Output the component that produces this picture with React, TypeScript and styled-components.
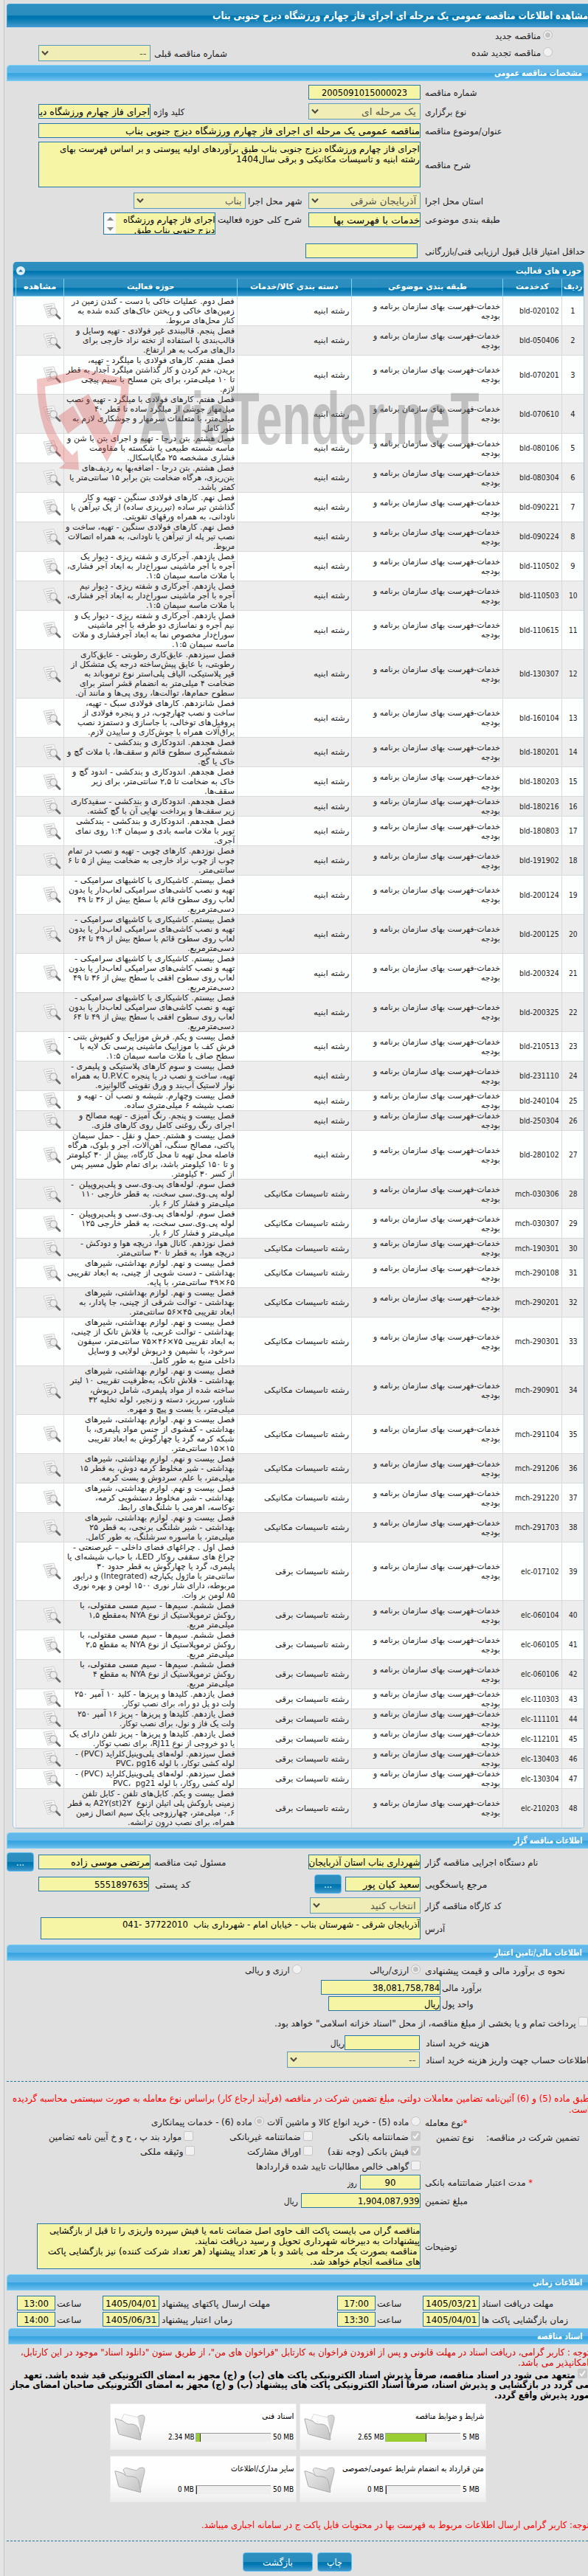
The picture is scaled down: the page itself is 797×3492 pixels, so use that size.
import React, { useLayoutEffect, useRef, useState } from 'react';
import styled, { createGlobalStyle, css } from 'styled-components';

const GlobalStyle = createGlobalStyle`
  * {
    box-sizing: border-box;
  }
  body {
    margin: 0;
    background: #e5e5e5;
    color: #1c1c1c;
    font-family: 'DejaVu Sans Condensed', 'DejaVu Sans', sans-serif;
    font-size: 12px;
    overflow-x: hidden;
  }
`;

const barGradient = css`
  background: linear-gradient(#2f90c0 0%, #2a8dbd 50%, #0075ae 51%, #0078b2 64%, #4499cb 100%);
`;

const Page = styled.div`
  direction: rtl;
  margin-left: 5px;
  border-left: 1px solid #c6c6c6;
  background: #e0e0e0;
  width: 792px;
  height: 3492px;
  overflow: hidden;
`;

const TitleBar = styled.div`
  ${barGradient}
  height: 32px;
  margin: 5px 0 0 3px;
  border: 1px solid #3a9edc;
  border-right: 0;
  border-radius: 4px 0 0 0;
  color: #fff;
  font-size: 14px;
  font-weight: bold;
  display: flex;
  align-items: center;
`;

const SectionBar = styled.div<{ $top: number; $inset?: number }>`
  height: 22px;
  margin: ${p => p.$top}px 0 0 ${p => p.$inset ?? 3}px;
  padding-right: 8px;
  background: linear-gradient(#62b8e9 0%, #60b6e8 48%, #36a4e0 50%, #3da8e2 65%, #6fbeeb 100%);
  border: 1px solid #79d0f7;
  border-right: 0;
  border-radius: 5px 0 0 0;
  color: #fff;
  font-weight: bold;
  display: flex;
  align-items: center;
`;

const Row = styled.div<{ $cols: string; $h: number; $top?: number; $align?: string }>`
  display: grid;
  grid-template-columns: ${p => p.$cols};
  height: ${p => p.$h}px;
  margin-top: ${p => p.$top ?? 0}px;
  align-items: ${p => p.$align ?? 'center'};
`;

const Label = styled.div<{ $pad?: number; $start?: boolean }>`
  display: flex;
  justify-content: ${p => (p.$start ? 'flex-start' : 'flex-end')};
  align-items: center;
  padding-left: ${p => p.$pad ?? 6}px;
  line-height: 16px;
  padding-top: 2px;
`;

const FieldBox = styled.div<{ $center?: boolean }>`
  height: 20px;
  border: 1px solid #2577aa;
  background: #f6f4a5;
  color: #000;
  font-size: 13px;
  overflow: hidden;
  display: flex;
  align-items: center;
  justify-content: ${p => (p.$center ? 'center' : 'flex-start')};
`;

const AreaBox = styled.div<{ $h: number }>`
  position: relative;
  height: ${p => p.$h}px;
  border: 1px solid #2577aa;
  background: #f6f4a5;
  color: #000;
  overflow: hidden;
  line-height: 14px;
  padding-top: 2px;
`;

const SelectBox = styled.div`
  height: 22px;
  border: 1px solid #5b9bbd;
  background: #f0edb7;
  color: #55554a;
  font-size: 13px;
  display: flex;
  align-items: center;
  justify-content: space-between;
  padding: 0 5px 0 3px;
`;

const ScrollStrip = styled.div`
  position: absolute;
  left: 0;
  top: 0;
  width: 16px;
  height: 100%;
  background: #fbfbfb;
  display: flex;
  flex-direction: column;
  justify-content: space-around;
  align-items: center;
`;

const Radio = styled.span<{ $on?: boolean }>`
  width: 13px;
  height: 13px;
  border-radius: 50%;
  border: 1px solid #c4c4c4;
  background: ${p => (p.$on ? '#c2c2c2' : '#f1f1f1')};
  box-shadow: ${p => (p.$on ? 'inset 0 0 0 2px #f1f1f1' : 'none')};
  flex: none;
  margin-bottom: 3px;
`;

const CheckBox = styled.span<{ $on?: boolean }>`
  width: 13px;
  height: 13px;
  border-radius: 2px;
  border: 1px solid #c6c6c6;
  background: ${p => (p.$on ? '#cacaca' : '#f1f1f1')};
  flex: none;
  display: flex;
  margin-bottom: 4px;
`;

const Option = styled.div`
  display: flex;
  align-items: center;
  line-height: 16px;
  gap: 3px;
`;

const Button = styled.div`
  ${barGradient}
  height: 26px;
  border: 1px solid #5cbcf0;
  border-radius: 4px;
  color: #fff;
  font-size: 13px;
  display: flex;
  align-items: center;
  justify-content: center;
`;

const DashedRule = styled.div<{ $top: number }>`
  margin: ${p => p.$top}px 0 0 3px;
  border-top: 1px dashed #2577aa;
`;

const Paragraph = styled.div<{ $top: number; $lh: number; $color?: string; $bold?: boolean }>`
  margin: ${p => p.$top}px -2px 0 0;
  line-height: ${p => p.$lh}px;
  color: ${p => p.$color ?? '#000'};
  font-weight: ${p => (p.$bold ? 'bold' : 'normal')};
  font-size: 12.5px;
`;

const Star = styled.span`
  color: #f00;
`;

const Panel = styled.div`
  position: relative;
  width: 775px;
  margin: 5px 5px 0 0;
  border: 1px solid #9cc8e0;
  border-top: 0;
  border-radius: 5px;
  overflow: hidden;
  background: #f4f7f9;
`;

const PanelTitle = styled.div`
  ${barGradient}
  height: 23px;
  padding: 0 3px 0 4px;
  color: #fff;
  font-weight: bold;
  display: flex;
  align-items: center;
  justify-content: space-between;
`;

const columns = '30px 80px 205px 155px 235px 65px';

const HeadRow = styled.div`
  ${barGradient}
  display: grid;
  grid-template-columns: ${columns};
  height: 24px;
  padding-left: 3px;
  border-bottom: 1px solid #7ad4f7;
  color: #fff;
  font-weight: bold;
  font-size: 11px;
`;

const HeadCell = styled.div`
  display: flex;
  align-items: center;
  justify-content: center;
  border-left: 1px solid #7ad4f7;
  padding-bottom: 2px;
`;

const BodyRow = styled.div<{ $lines: number; $even: boolean }>`
  display: grid;
  grid-template-columns: ${columns};
  height: ${p => p.$lines * 13 + 1}px;
  margin-left: 3px;
  background: ${p => (p.$even ? '#ededed' : '#fdfefe')};
  border-bottom: 1px solid #dadada;
  font-size: 11px;
  line-height: 13px;
`;

const BodyCell = styled.div<{ $center?: boolean }>`
  display: flex;
  flex-direction: column;
  justify-content: center;
  align-items: ${p => (p.$center ? 'center' : 'flex-start')};
  border-left: 1px solid #dadada;
  padding-right: ${p => (p.$center ? 0 : 3)}px;
`;

const Watermark = styled.div`
  position: absolute;
  left: 32px;
  right: 141px;
  top: 145px;
  height: 142px;
  pointer-events: none;
  display: flex;
  justify-content: space-between;
`;

const WatermarkName = styled.div`
  margin-top: 17px;
  font-family: 'Liberation Sans', sans-serif;
  font-weight: bold;
  font-size: 100px;
  line-height: 100px;
  color: rgba(110, 110, 110, 0.36);
`;

const Cards = styled.div`
  display: grid;
  grid-template-columns: 253px 253px;
  gap: 8px 4px;
  margin: 4px 138px 0 0;
`;

const Card = styled.div`
  height: 63px;
  background: linear-gradient(#fff 0%, #fdfdfd 60%, #ededed 100%);
  border: 1px solid #eaeaea;
  display: grid;
  grid-template-columns: 1fr 48px;
  align-items: center;
  color: #000;
  font-size: 11px;
`;

const CardName = styled.div`
  padding-right: 2px;
  height: 28px;
`;

const Meter = styled.div`
  display: grid;
  grid-template-columns: 34px 102px 60px;
  height: 14px;
  align-items: center;
`;

const MeterEnd = styled.div<{ $used?: boolean }>`
  display: flex;
  justify-content: ${p => (p.$used ? 'flex-start' : 'flex-end')};
  padding: ${p => (p.$used ? '0 2px 0 0' : '0 0 0 3px')};
`;

const Track = styled.div`
  height: 12px;
  background: #eeeeee;
  border-top: 1px solid #999;
  border-left: 1px solid #aaa;
  direction: ltr;
`;

const Used = styled.div`
  height: 100%;
  background: #9acd32;
  border-right: 1px solid #333;
`;

const Buttons = styled.div`
  display: grid;
  grid-template-columns: 47px 95px;
  gap: 6px;
  margin: 15px 320px 0 0;
`;

const FitBox = styled.span`
  display: inline-block;
  vertical-align: top;
  flex: none;
  white-space: pre;
`;

const FitInner = styled.span`
  display: inline-block;
  vertical-align: top;
  transform-origin: right center;
`;

/* Condenses a line of text so that it takes exactly `w` pixels. */
const Fit: React.FC<{ w: number; children: React.ReactNode }> = ({ w, children }) => {
  const ref = useRef<HTMLSpanElement>(null);
  const [scale, setScale] = useState(1);
  useLayoutEffect(() => {
    if (ref.current) {
      setScale(w / ref.current.offsetWidth);
    }
  }, [w]);
  return (
    <FitBox style={{ width: w }}>
      <FitInner ref={ref} style={{ transform: `scaleX(${scale})` }}>{children}</FitInner>
    </FitBox>
  );
};

const Chevron = () => (
  <svg width="10" height="8" viewBox="0 0 10 8">
    <path d="M1 1.5 L5 5.8 L9 1.5" fill="none" stroke="#4a4a42" strokeWidth="2" />
  </svg>
);

const Check = () => (
  <svg width="11" height="11" viewBox="0 0 11 11">
    <path d="M2 5.5 L4.5 8.5 L9 2" fill="none" stroke="#fff" strokeWidth="1.6" />
  </svg>
);

const ViewIcon = () => (
  <svg width="25" height="24" viewBox="0 0 25 24">
    <path d="M1 3 L15 1 L20 17 L7 21 Z" fill="#f5f5f5" stroke="#cfcfcf" strokeWidth="0.9" />
    <path d="M4 6 L13 4.5 M4.5 9 L13 7.5 M5.5 12 L11 11 M6.5 15 L10 14.4 M7.5 18 L12 17" stroke="#a9a9a9" strokeWidth="0.9" />
    <circle cx="14.5" cy="12.5" r="4.8" fill="#ececec" fillOpacity="0.85" stroke="#b4b4b4" strokeWidth="1.3" />
    <path d="M18.5 17 L23 21.5" stroke="#6d6d6d" strokeWidth="2.8" strokeLinecap="round" />
  </svg>
);

const CollapseIcon = () => (
  <svg width="12" height="12" viewBox="0 0 12 12">
    <circle cx="6" cy="6" r="6" fill="#dff0fa" />
    <path d="M3 7.5 L6 4.2 L9 7.5 Z" fill="#1c74a5" />
  </svg>
);

const Shield = () => (
  <svg width="126" height="142" viewBox="0 0 126 142">
    <g opacity="0.33">
      <path
        d="M0 14 Q36 8 62 0 Q90 8 125 14 Q124 76 95 126 L51 46 L70 34 L101 90 Q113 60 114 24 Q88 19 62 12 Q38 19 11 24 Q13 84 48 117 L55 110 L57 137 L30 135 L38 128 Q0 88 0 14 Z"
        fill="#d9534f"
      />
      <path d="M29 64 L49 50 L62 73 L42 88 Z" fill="#d9534f" />
    </g>
  </svg>
);

const Folder: React.FC<{ full?: boolean }> = ({ full }) => (
  <svg width="43" height="38" viewBox="0 0 43 38">
    <defs>
      <linearGradient id="folder" x1="0" y1="0" x2="1" y2="1">
        <stop offset="0" stopColor="#ececec" />
        <stop offset="1" stopColor="#c2c2c2" />
      </linearGradient>
    </defs>
    <path d="M12 6 Q14 2 18 4 L30 7 Q34 2 39 3 Q42 4 41 9 L35 34 Q20 30 12 6 Z" fill="url(#folder)" stroke="#b5b5b5" />
    {full && <path d="M9 11 L13 1.5 L32 6 L36 26 L30 27 Z" fill="#fbfbfb" stroke="#dcdcdc" />}
    <path d="M1 9 Q0 7 3 8 L12 11 Q16 16 23 15 Q32 16 33 22 L36 36 Q35 37 33 36 L7 29 Q5 28 5 25 Z" fill="url(#folder)" stroke="#ababab" />
  </svg>
);

const Select: React.FC<{ text: string; w: number }> = ({ text, w }) => (
  <SelectBox>
    <Fit w={w}>{text}</Fit>
    <Chevron />
  </SelectBox>
);

type Line = [string, number];

const ch20 = 'فصل بیستم. کاشیکاری با کاشیهای سرامیکی -';
const ch20b = 'تهیه و نصب کاشی‌های سرامیکی لعاب‌دار یا بدون';
const ch29 = 'فصل بیست و نهم. لوازم بهداشتی، شیرهای';
const ch6 = 'فصل ششم. سیم‌ها - سیم مسی مفتولی، با';
const ch3 = 'فصل سوم. لوله‌های پی.وی.سی و پلی‌پروپیلن  -';

const activities: { code: string; lines: Line[] }[] = [
  { code: 'bld-020102', lines: [['فصل دوم. عملیات خاکی با دست - کندن زمین در', 221], ['زمین‌های خاکی و ریختن خاک‌های کنده شده به', 213], ['کنار محل‌های مربوط.', 93]] },
  { code: 'bld-050406', lines: [['فصل پنجم. قالببندی غیر فولادی - تهیه وسایل و', 215], ['قالب‌بندی با استفاده از تخته نراد خارجی برای', 206], ['دال‌های مرکب به هر ارتفاع.', 124]] },
  { code: 'bld-070201', lines: [['فصل هفتم. کارهای فولادی با میلگرد - تهیه،', 199], ['بریدن، خم کردن و کار گذاشتن میلگرد آجدار به قطر', 228], ['تا ۱۰ میلی‌متر، برای بتن مسلح با سیم پیچی', 208], ['لازم.', 20]] },
  { code: 'bld-070610', lines: [['فصل هفتم. کارهای فولادی با میلگرد - تهیه و نصب', 228], ['میل‌مهار جوشی از میلگرد ساده تا قطر ۴۰', 190], ['میلی‌متر، با متعلقات سرمهار و جوشکاری لازم به', 220], ['طور کامل.', 45]] },
  { code: 'bld-080106', lines: [['فصل هشتم. بتن درجا - تهیه و اجرای بتن با شن و', 227], ['ماسه شسته طبیعی یا شکسته با مقاومت', 197], ['فشاری مشخصه ۲۵ مگاپاسکال.', 146]] },
  { code: 'bld-080304', lines: [['فصل هشتم. بتن درجا - اضافه‌بها به ردیف‌های', 207], ['بتن‌ریزی، هرگاه ضخامت بتن برابر ۱۵ سانتی‌متر یا', 224], ['کمتر باشد.', 50]] },
  { code: 'bld-090221', lines: [['فصل نهم. کارهای فولادی سنگین - تهیه و کار', 205], ['گذاشتن تیر ساده (تیرریزی ساده) از یک تیرآهن یا', 222], ['ناودانی، به همراه ورقهای تقویتی.', 153]] },
  { code: 'bld-090224', lines: [['فصل نهم. کارهای فولادی سنگین - تهیه، ساخت و', 229], ['نصب تیر پله از تیرآهن یا ناودانی، به همراه اتصالات', 226], ['مربوط.', 29]] },
  { code: 'bld-110502', lines: [['فصل یازدهم. آجرکاری و شفته ریزی - دیوار یک', 209], ['آجره با آجر ماشینی سوراخ‌دار به ابعاد آجر فشاری،', 227], ['با ملات ماسه سیمان ۱:۵.', 120]] },
  { code: 'bld-110503', lines: [['فصل یازدهم. آجرکاری و شفته ریزی - دیوار نیم', 210], ['آجره با آجر ماشینی سوراخ‌دار به ابعاد آجر فشاری،', 227], ['با ملات ماسه سیمان ۱:۵.', 120]] },
  { code: 'bld-110615', lines: [['فصل یازدهم. آجرکاری و شفته ریزی - دیوار یک و', 217], ['نیم آجره و نماسازی دو طرفه با آجر ماشینی', 199], ['سوراخ‌دار مخصوص نما به ابعاد آجرفشاری و ملات', 220], ['ماسه سیمان ۱:۵.', 85]] },
  { code: 'bld-130307', lines: [['فصل سیزدهم. عایق‌کاری رطوبتی - عایق‌کاری', 209], ['رطوبتی، با عایق پیش‌ساخته درجه یک متشکل از', 222], ['قیر پلاستیکی، الیاف پلی‌استر نوع ترموباند به', 204], ['ضخامت ۴ میلی‌متر به انضمام قشر آستر برای', 210], ['سطوح حمام‌ها، توالت‌ها، روی پی‌ها و مانند آن.', 216]] },
  { code: 'bld-160104', lines: [['فصل شانزدهم. کارهای فولادی سبک - تهیه،', 202], ['ساخت و نصب چهارچوب، در و پنجره فولادی از', 206], ['پروفیل‌های توخالی، با جاسازی و دستمزد نصب', 213], ['یراق‌آلات همراه با جوش‌کاری و ساییدن لازم.', 199]] },
  { code: 'bld-180201', lines: [['فصل هجدهم. اندودکاری و بندکشی -', 171], ['شمشه‌گیری سطوح قائم و سقف‌ها، با ملات گچ و', 227], ['خاک یا گچ.', 50]] },
  { code: 'bld-180203', lines: [['فصل هجدهم. اندودکاری و بندکشی - اندود گچ و', 220], ['خاک به ضخامت تا ۲,۵ سانتی‌متر، برای زیر', 194], ['سقف‌ها.', 41]] },
  { code: 'bld-180216', lines: [['فصل هجدهم. اندودکاری و بندکشی - سفیدکاری', 222], ['زیر سقف‌ها و پرداخت نهایی آن با گچ کشته.', 200]] },
  { code: 'bld-180803', lines: [['فصل هجدهم. اندودکاری و بندکشی - بندکشی', 215], ['توپر با ملات ماسه بادی و سیمان ۱:۴ روی نمای', 216], ['آجری.', 28]] },
  { code: 'bld-191902', lines: [['فصل نوزدهم. کارهای چوبی - تهیه و نصب در تمام', 226], ['چوب از چوب نراد خارجی به ضخامت بیش از ۵ تا ۶', 226], ['سانتی‌متر.', 49]] },
  { code: 'bld-200124', lines: [[ch20, 217], [ch20b, 225], ['لعاب روی سطوح قائم با سطح بیش از ۳۶ تا ۴۹', 213], ['دسی‌مترمربع.', 64]] },
  { code: 'bld-200125', lines: [[ch20, 217], [ch20b, 225], ['لعاب روی سطوح قائم با سطح بیش از ۴۹ تا ۶۴', 213], ['دسی‌مترمربع.', 64]] },
  { code: 'bld-200324', lines: [[ch20, 217], [ch20b, 225], ['لعاب روی سطوح افقی با سطح بیش از ۳۶ تا ۴۹', 219], ['دسی‌مترمربع.', 64]] },
  { code: 'bld-200325', lines: [[ch20, 217], [ch20b, 225], ['لعاب روی سطوح افقی با سطح بیش از ۴۹ تا ۶۴', 219], ['دسی‌مترمربع.', 64]] },
  { code: 'bld-210513', lines: [['فصل بیست و یکم. فرش موزاییک و کفپوش بتنی -', 226], ['فرش کف با موزاییک ماشینی پرسی تک لایه با', 210], ['سطح صاف با ملات ماسه سیمان ۱:۵.', 174]] },
  { code: 'bld-231110', lines: [['فصل بیست و سوم کارهای پلاستیکی و پلیمری -', 222], ['تهیه، ساخت و نصب در یا پنجره U.P.V.C به همراه', 222], ['نوار لاستیک آب‌بند و ورق تقویتی گالوانیزه.', 189]] },
  { code: 'bld-240104', lines: [['فصل بیست وچهارم. شیشه و نصب آن - تهیه و', 213], ['نصب شیشه ۶ میلی‌متری ساده.', 150]] },
  { code: 'bld-250304', lines: [['فصل بیست و پنجم. رنگ آمیزی - تهیه مصالح و', 211], ['اجرای رنگ روغنی کامل روی کارهای فلزی.', 194]] },
  { code: 'bld-280102', lines: [['فصل بیست و هشتم. حمل و نقل - حمل سیمان', 220], ['پاکتی، مصالح سنگی، آهن‌آلات، آجر و بلوک، هرگاه', 226], ['فاصله محل تهیه تا محل کارگاه، بیش از ۳۰ کیلومتر', 227], ['و تا ۱۵۰ کیلومتر باشد، برای تمام طول مسیر پس', 222], ['از کسر ۳۰ کیلومتر.', 86]] },
  { code: 'mch-030306', lines: [[ch3, 222], ['لوله پی.وی.سی سخت، به قطر خارجی ۱۱۰', 208], ['میلی‌متر و فشار کار ۶ بار.', 116]] },
  { code: 'mch-030307', lines: [[ch3, 222], ['لوله پی.وی.سی سخت، به قطر خارجی ۱۲۵', 208], ['میلی‌متر و فشار کار ۶ بار.', 116]] },
  { code: 'mch-190301', lines: [['فصل نوزدهم. کانال هوا، دریچه هوا و دودکش -', 209], ['دریچه هوا، به قطر تا ۳۰ سانتی‌متر.', 160]] },
  { code: 'mch-290108', lines: [[ch29, 203], ['بهداشتی - دست شویی از چینی، به ابعاد تقریبی', 227], ['۶۵×۴۹ سانتی‌متر، با پایه.', 119]] },
  { code: 'mch-290201', lines: [[ch29, 203], ['بهداشتی - توالت شرقی از چینی، جا پادار، به', 211], ['ابعاد تقریبی ۴۵×۵۶ سانتی‌متر.', 143]] },
  { code: 'mch-290301', lines: [[ch29, 203], ['بهداشتی - توالت غربی، با فلاش تانک از چینی،', 222], ['به ابعاد تقریبی ۷۵×۴۶×۷۵ سانتی‌متر، سیفون', 213], ['سرخود، با نشیمن و درپوش لولایی و وسایل', 199], ['داخلی منبع به طور کامل.', 115]] },
  { code: 'mch-290901', lines: [[ch29, 203], ['بهداشتی - فلاش تانک، به‌ظرفیت تقریبی ۱۰ لیتر', 223], ['ساخته شده از مواد پلیمری، شامل درپوش،', 196], ['شناور، سرریز، دسته و زنجیر، لوله تخلیه ۳۲', 198], ['میلی‌متر، با بست و پیچ و مهره.', 146]] },
  { code: 'mch-291104', lines: [[ch29, 203], ['بهداشتی - کفشوی از جنس مواد پلیمری، با', 201], ['شبکه کرمه گرد یا چهارگوش به ابعاد تقریبی', 199], ['۱۵×۱۵ سانتی‌متر.', 86]] },
  { code: 'mch-291206', lines: [[ch29, 203], ['بهداشتی - شیر مخلوط کرمه دوش، به قطر ۱۵', 210], ['میلی‌متر، با علم، سردوش و بست کرمه.', 184]] },
  { code: 'mch-291220', lines: [[ch29, 203], ['بهداشتی - شیر مخلوط دستشویی کرمه،', 189], ['توکاسه، اهرمی با شلنگ‌های رابط.', 159]] },
  { code: 'mch-291703', lines: [[ch29, 203], ['بهداشتی - شیر شلنگی برنجی، به قطر ۲۵', 197], ['میلی‌متر، با ماسوره سرشلنگ، به طور کامل.', 202]] },
  { code: 'elc-017102', lines: [['فصل اول . چراغهای فضای داخلی – غیرصنعتی -', 219], ['چراغ های سقفی روکار LED، با حباب شیشه‌ای یا', 227], ['پلیمری، گرد یا چهارگوش به قطر حدود ۳۰', 187], ['سانتی‌متر با ماژول یکپارچه (Integrated) و درایور', 219], ['مربوطه، دارای شار نوری ۱۵۰۰ لومن و بهره نوری', 219], ['۸۵ لومن بر وات.', 72]] },
  { code: 'elc-060104', lines: [[ch6, 210], ['روکش ترموپلاستیک از نوع NYA به‌مقطع ۱,۵', 198], ['میلی‌متر مربع.', 65]] },
  { code: 'elc-060105', lines: [[ch6, 210], ['روکش ترموپلاستیک از نوع NYA به مقطع ۲,۵', 203], ['میلی‌متر مربع.', 65]] },
  { code: 'elc-060106', lines: [[ch6, 210], ['روکش ترموپلاستیک از نوع NYA به مقطع ۴', 192], ['میلی‌متر مربع.', 65]] },
  { code: 'elc-110303', lines: [['فصل یازدهم. کلیدها و پریزها - کلید ۱۰ آمپر ۲۵۰', 217], ['ولت دو پل دو راه، برای نصب توکار.', 153]] },
  { code: 'elc-111101', lines: [['فصل یازدهم. کلیدها و پریزها - پریز ۱۶ آمپر ۲۵۰', 213], ['ولت یک فاز و نول، برای نصب توکار.', 156]] },
  { code: 'elc-112101', lines: [['فصل یازدهم. کلیدها و پریزها - پریز تلفن دارای یک', 224], ['یا دو خروجی از نوع RJ11، برای نصب توکار.', 192]] },
  { code: 'elc-130403', lines: [['فصل سیزدهم. لوله‌های پلی‌وینیل‌کلراید (PVC) -', 216], ['لوله کشی توکار، با لوله PVC، pg16', 161]] },
  { code: 'elc-130304', lines: [['فصل سیزدهم. لوله‌های پلی‌وینیل‌کلراید (PVC) -', 216], ['لوله کشی روکار، با لوله PVC،  pg21', 165]] },
  { code: 'elc-210203', lines: [['فصل بیست و یکم. کابل‌های تلفن - کابل تلفن', 207], ['زمینی باروکش پلی اتیلن ازنوع  A2Y(st)2Y به قطر', 226], ['۰,۶ میلی‌متر، چهارزوجی بایک سیم اتصال زمین', 215], ['همراه، برای نصب درون ترانشه.', 145]] },
];

const categories: Record<string, Line> = {
  bld: ['رشته ابنیه', 48],
  mch: ['رشته تاسیسات مکانیکی', 115],
  elc: ['رشته تاسیسات برقی', 100],
};

const headers: Line[] = [
  ['ردیف', 25],
  ['کدخدمت', 45],
  ['طبقه بندی موضوعی', 107],
  ['دسته بندی کالا/خدمات', 119],
  ['حوزه فعالیت', 64],
  ['مشاهده', 44],
];

const documents = [
  { name: 'شرایط و ضوابط مناقصه', w: 93, max: '5 MB', maxW: 23, used: '2.65 MB', usedW: 36, part: 54, full: true },
  { name: 'اسناد فنی', w: 44, max: '50 MB', maxW: 28, used: '2.34 MB', usedW: 36, part: 6, full: true },
  { name: 'متن قرارداد به انضمام شرایط عمومی/خصوصی', w: 192, max: '5 MB', maxW: 23, used: '0 MB', usedW: 22, part: 1, full: false },
  { name: 'سایر مدارک/اطلاعات', w: 86, max: '50 MB', maxW: 28, used: '0 MB', usedW: 22, part: 1, full: false },
];

const ActivityTable = () => (
  <Panel>
    <PanelTitle>
      <Fit w={89}>حوزه های فعالیت</Fit>
      <CollapseIcon />
    </PanelTitle>
    <HeadRow>
      {headers.map(([text, w]) => (
        <HeadCell key={text}><Fit w={w}>{text}</Fit></HeadCell>
      ))}
    </HeadRow>
    {activities.map(({ code, lines }, i) => {
      const [category, categoryWidth] = categories[code.slice(0, 3)];
      return (
        <BodyRow key={code} $lines={lines.length} $even={i % 2 === 1}>
          <BodyCell $center><Fit w={i < 9 ? 6 : 12}>{i + 1}</Fit></BodyCell>
          <BodyCell><Fit w={code[0] === 'm' ? 60 : code[0] === 'e' ? 52 : 54}>{code}</Fit></BodyCell>
          <BodyCell>
            <Fit w={172}>خدمات-فهرست بهای سازمان برنامه و</Fit>
            <Fit w={26}>بودجه</Fit>
          </BodyCell>
          <BodyCell><Fit w={categoryWidth}>{category}</Fit></BodyCell>
          <BodyCell>
            {lines.map(([text, w], n) => <Fit key={n} w={w}>{text}</Fit>)}
          </BodyCell>
          <BodyCell><ViewIcon /></BodyCell>
        </BodyRow>
      );
    })}
    <Watermark>
      <WatermarkName><Fit w={462}>AriaTender.neT</Fit></WatermarkName>
      <Shield />
    </Watermark>
  </Panel>
);

const App: React.FC = () => (
  <>
    <GlobalStyle />
    <Page>
      <TitleBar>
        <Fit w={509}>مشاهده اطلاعات مناقصه عمومی یک مرحله ای اجرای فاز چهارم ورزشگاه دیزج جنوبی بناب</Fit>
      </TitleBar>
      <Row $cols="48px 200px" $h={24}>
        <span />
        <Option><Radio $on /><Fit w={62}>مناقصه جدید</Fit></Option>
      </Row>
      <Row $cols="48px 340px 205px 152px" $h={22}>
        <span />
        <Option><Radio /><Fit w={94}>مناقصه تجدید شده</Fit></Option>
        <Label $pad={5}><Fit w={99}>شماره مناقصه قبلی</Fit></Label>
        <Select text="--" w={9} />
      </Row>

      <SectionBar $top={5}><Fit w={119}>مشخصات مناقصه عمومی</Fit></SectionBar>
      <Row $cols="227px 152px" $h={20} $top={5}>
        <Label><Fit w={71}>شماره مناقصه</Fit></Label>
        <FieldBox $center><Fit w={116}>2005091015000023</Fit></FieldBox>
      </Row>
      <Row $cols="227px 152px 214px 152px" $h={22} $top={5}>
        <Label><Fit w={56}>نوع برگزاری</Fit></Label>
        <Select text="یک مرحله ای" w={74} />
        <Label $pad={4}><Fit w={42}>کلید واژه</Fit></Label>
        <FieldBox><Fit w={226}>اجرای فاز چهارم ورزشگاه دیزج جنوبی بناب</Fit></FieldBox>
      </Row>
      <Row $cols="227px 518px" $h={20} $top={5}>
        <Label><Fit w={104}>عنوان/موضوع مناقصه</Fit></Label>
        <FieldBox><Fit w={399}>مناقصه عمومی یک مرحله ای اجرای فاز چهارم ورزشگاه دیزج جنوبی بناب</Fit></FieldBox>
      </Row>
      <Row $cols="227px 518px" $h={62} $top={5}>
        <Label><Fit w={62}>شرح مناقصه</Fit></Label>
        <AreaBox $h={62}>
          <Fit w={488}>اجرای فاز چهارم ورزشگاه دیزج جنوبی بناب طبق برآوردهای اولیه پیوستی و بر اساس فهرست بهای</Fit>
          <br />
          <Fit w={249}>رشته ابنیه و تاسیسات مکانیکی و برقی سال1404</Fit>
        </AreaBox>
      </Row>
      <Row $cols="227px 152px 85px 152px" $h={22} $top={7}>
        <Label><Fit w={79}>استان محل اجرا</Fit></Label>
        <Select text="آذربایجان شرقی" w={89} />
        <Label $pad={3}><Fit w={73}>شهر محل اجرا</Fit></Label>
        <Select text="بناب" w={22} />
      </Row>
      <Row $cols="227px 152px 126px 152px" $h={30} $top={5} $align="start">
        <Label><Fit w={102}>طبقه بندی موضوعی</Fit></Label>
        <FieldBox><Fit w={117}>خدمات با فهرست بها</Fit></FieldBox>
        <Label $pad={3}><Fit w={114}>شرح کلی حوزه فعالیت</Fit></Label>
        <AreaBox $h={30}>
          <Fit w={124}>اجرای فاز چهارم ورزشگاه</Fit>
          <br />
          <Fit w={109}>دیزج جنوبی بناب طبق</Fit>
          <ScrollStrip>
            <svg width="9" height="5"><path d="M0 5 L4.5 0 L9 5 Z" fill="#8a8a8a" /></svg>
            <svg width="9" height="5"><path d="M0 0 L4.5 5 L9 0 Z" fill="#8a8a8a" /></svg>
          </ScrollStrip>
        </AreaBox>
      </Row>
      <Row $cols="231px 152px" $h={20} $top={12}>
        <Label $pad={10}><Fit w={217}>حداقل امتیاز قابل قبول ارزیابی فنی/بازرگانی</Fit></Label>
        <FieldBox />
      </Row>

      <ActivityTable />

      <SectionBar $top={5}><Fit w={93}>اطلاعات مناقصه گزار</Fit></SectionBar>
      <Row $cols="227px 152px 214px 152px 43px" $h={25} $top={5}>
        <Label><Fit w={153}>نام دستگاه اجرایی مناقصه گزار</Fit></Label>
        <FieldBox><Fit w={186}>شهرداری بناب استان آذربایجان شرقی</Fit></FieldBox>
        <Label $pad={5}><Fit w={97}>مسئول ثبت مناقصه</Fit></Label>
        <FieldBox><Fit w={107}>مرتضی موسی زاده</Fit></FieldBox>
        <Row $cols="6px 37px" $h={26}><span /><Button>...</Button></Row>
      </Row>
      <Row $cols="227px 102px 5px 37px 224px 150px" $h={26} $top={5}>
        <Label><Fit w={84}>مرجع پاسخگویی</Fit></Label>
        <FieldBox><Fit w={77}>سعید کیان پور</Fit></FieldBox>
        <span />
        <Button>...</Button>
        <Label $pad={8}><Fit w={48}>کد پستی</Fit></Label>
        <FieldBox><Fit w={73}>5551897635</Fit></FieldBox>
      </Row>
      <Row $cols="227px 150px" $h={22} $top={5}>
        <Label><Fit w={104}>کد کارگاه مناقصه گزار</Fit></Label>
        <Select text="انتخاب کنید" w={62} />
      </Row>
      <Row $cols="227px 515px" $h={30} $top={5}>
        <Label><Fit w={27}>آدرس</Fit></Label>
        <AreaBox $h={30}>
          <Fit w={403}>آذربایجان شرقی - شهرستان بناب - خیابان امام - شهرداری بناب  37722010 -041</Fit>
        </AreaBox>
      </Row>

      <SectionBar $top={7}><Fit w={119}>اطلاعات مالی/تامین اعتبار</Fit></SectionBar>
      <Row $cols="227px 161px 200px" $h={26}>
        <Label><Fit w={190}>نحوه ی برآورد مالی و قیمت پیشنهادی</Fit></Label>
        <Option><Radio $on /><Fit w={53}>ارزی/ریالی</Fit></Option>
        <Option><Radio /><Fit w={61}>ارزی و ریالی</Fit></Option>
      </Row>
      <Row $cols="200px 162px" $h={20}>
        <Label $pad={2}><Fit w={54}>برآورد مالی</Fit></Label>
        <FieldBox><Fit w={91}>38,081,758,784</Fit></FieldBox>
      </Row>
      <Row $cols="200px 152px" $h={20} $top={2}>
        <Label $pad={2}><Fit w={42}>واحد پول</Fit></Label>
        <FieldBox><Fit w={21}>ریال</Fit></FieldBox>
      </Row>
      <Row $cols="500px" $h={33}>
        <Option><CheckBox /><Fit w={409}>پرداخت تمام و یا بخشی از مبلغ مناقصه، از محل "اسناد خزانه اسلامی" خواهد بود.</Fit></Option>
      </Row>
      <Row $cols="228px 102px 60px" $h={20}>
        <Label $pad={8}><Fit w={86}>هزینه خرید اسناد</Fit></Label>
        <FieldBox />
        <Label $start><Fit w={19}>ریال</Fit></Label>
      </Row>
      <Row $cols="228px 180px" $h={22} $top={2}>
        <Label $pad={8}><Fit w={221}>اطلاعات حساب جهت واریز هزینه خرید اسناد</Fit></Label>
        <Select text="--" w={9} />
      </Row>
      <DashedRule $top={18} />
      <Paragraph $top={15} $lh={15} $color="#f00">
        <Fit w={782}>طبق ماده (5) و (6) آئین‌نامه تضامین معاملات دولتی، مبلغ تضمین شرکت در مناقصه (فرآیند ارجاع کار) براساس نوع معامله به صورت سیستمی محاسبه گردیده</Fit>
        <br />
        <Fit w={28}>است.</Fit>
      </Paragraph>
      <Row $cols="227px 212px 200px" $h={20}>
        <Label><Star>*</Star><Fit w={52}>نوع معامله</Fit></Label>
        <Option><Radio /><Fit w={192}>ماده (5) - خرید انواع کالا و ماشین آلات</Fit></Option>
        <Option><Radio $on /><Fit w={137}>ماده (6) - خدمات پیمانکاری</Fit></Option>
      </Row>
      <Row $cols="12px 142px 73px 146px 162px 220px" $h={20}>
        <span />
        <Label $start><Fit w={126}>تضمین شرکت در مناقصه:</Fit></Label>
        <Label $start><Fit w={52}>نوع تضمین</Fit></Label>
        <Option><CheckBox $on><Check /></CheckBox><Fit w={81}>ضمانتنامه بانکی</Fit></Option>
        <Option><CheckBox /><Fit w={97}>ضمانتنامه غیربانکی</Fit></Option>
        <Option><CheckBox /><Fit w={180}>موارد بند پ ، ح و خ آیین نامه تضامین</Fit></Option>
      </Row>
      <Row $cols="227px 146px 160px 220px" $h={20}>
        <span />
        <Option><CheckBox $on><Check /></CheckBox><Fit w={110}>فیش بانکی (وجه نقد)</Fit></Option>
        <Option><CheckBox /><Fit w={73}>اوراق مشارکت</Fit></Option>
        <Option><CheckBox /><Fit w={58}>وثیقه ملکی</Fit></Option>
      </Row>
      <Row $cols="227px 300px" $h={20}>
        <span />
        <Option><CheckBox /><Fit w={207}>گواهی خالص مطالبات تایید شده قراردادها</Fit></Option>
      </Row>
      <Row $cols="227px 82px 60px" $h={20} $top={1}>
        <Label><Star>*&nbsp;</Star><Fit w={137}>مدت اعتبار ضمانتنامه بانکی</Fit></Label>
        <FieldBox $center><Fit w={15}>90</Fit></FieldBox>
        <Row $cols="4px 40px" $h={18}><span /><Label $start><Fit w={13}>روز</Fit></Label></Row>
      </Row>
      <Row $cols="227px 162px 60px" $h={20} $top={5}>
        <Label><Fit w={58}>مبلغ تضمین</Fit></Label>
        <FieldBox><Fit w={84}>1,904,087,939</Fit></FieldBox>
        <Row $cols="4px 40px" $h={18}><span /><Label $start><Fit w={19}>ریال</Fit></Label></Row>
      </Row>
      <Row $cols="227px 520px" $h={62} $top={21}>
        <Label><Fit w={43}>توضیحات</Fit></Label>
        <AreaBox $h={62}>
          <Fit w={502}>مناقصه گران می بایست پاکت الف حاوی اصل ضمانت نامه یا فیش سپرده واریزی را تا قبل از بازگشایی</Fit>
          <br />
          <Fit w={305}>پیشنهادات به دبیرخانه شهرداری تحویل و رسید دریافت نمایند.</Fit>
          <br />
          <Fit w={504}> مناقصه بصورت یک مرحله می باشد و با هر تعداد پیشنهاد (هر تعداد شرکت کننده) نیز بازگشایی پاکت</Fit>
          <br />
          <Fit w={149}>های مناقصه انجام خواهد شد.</Fit>
        </AreaBox>
      </Row>

      <SectionBar $top={7}><Fit w={67}>اطلاعات زمانی</Fit></SectionBar>
      <Row $cols="147px 77px 64px 52px 241px 77px 64px 52px" $h={20} $top={7}>
        <Label $pad={3}><Fit w={97}>مهلت دریافت اسناد</Fit></Label>
        <FieldBox $center><Fit w={69}>1405/03/21</Fit></FieldBox>
        <Label $pad={2}><Fit w={33}>ساعت</Fit></Label>
        <FieldBox $center><Fit w={34}>17:00</Fit></FieldBox>
        <Label $pad={3}><Fit w={147}>مهلت ارسال پاکتهای پیشنهاد</Fit></Label>
        <FieldBox $center><Fit w={69}>1405/04/01</Fit></FieldBox>
        <Label $pad={2}><Fit w={33}>ساعت</Fit></Label>
        <FieldBox $center><Fit w={34}>13:00</Fit></FieldBox>
      </Row>
      <Row $cols="147px 77px 64px 52px 241px 77px 64px 52px" $h={20} $top={2}>
        <Label $pad={3}><Fit w={117}>زمان بازگشایی پاکت ها</Fit></Label>
        <FieldBox $center><Fit w={69}>1405/04/01</Fit></FieldBox>
        <Label $pad={2}><Fit w={33}>ساعت</Fit></Label>
        <FieldBox $center><Fit w={34}>13:30</Fit></FieldBox>
        <Label $pad={3}><Fit w={96}>زمان اعتبار پیشنهاد</Fit></Label>
        <FieldBox $center><Fit w={69}>1405/06/31</Fit></FieldBox>
        <Label $pad={2}><Fit w={33}>ساعت</Fit></Label>
        <FieldBox $center><Fit w={34}>14:00</Fit></FieldBox>
      </Row>

      <SectionBar $top={2} $inset={5}><Fit w={61}>اسناد مناقصه</Fit></SectionBar>
      <Paragraph $top={4} $lh={14} $color="#d80000">
        <Fit w={771}>توجه : کاربر گرامی، دریافت اسناد در مهلت قانونی و پس از افزودن فراخوان به کارتابل "فراخوان های من"، از طریق ستون "دانلود اسناد" موجود در این کارتابل،</Fit>
        <br />
        <Fit w={97}>امکانپذیر می باشد.</Fit>
      </Paragraph>
      <Paragraph $top={1} $lh={14} $bold>
        <Row $cols="3px 780px" $h={15}>
          <span />
          <Option><CheckBox $on><Check /></CheckBox><Fit w={748}>متعهد می شود در اسناد مناقصه، صرفاً پذیرش اسناد الکترونیکی پاکت های (ب) و (ج) مجهز به امضای الکترونیکی قید شده باشد. تعهد</Fit></Option>
        </Row>
        <Fit w={785}>می گردد در بازگشایی و پذیرش اسناد، صرفاً اسناد الکترونیکی پاکت های پیشنهاد (ب) و (ج) مجهز به امضای الکترونیکی صاحبان امضای مجاز</Fit>
        <br />
        <Fit w={129}>مورد پذیرش واقع گردد.</Fit>
      </Paragraph>
      <Cards>
        {documents.map(doc => (
          <Card key={doc.name}>
            <div>
              <CardName><Fit w={doc.w}>{doc.name}</Fit></CardName>
              <Meter>
                <MeterEnd><Fit w={doc.maxW}><bdi>{doc.max}</bdi></Fit></MeterEnd>
                <Track><Used style={{ width: `${doc.part}%` }} /></Track>
                <MeterEnd $used><Fit w={doc.usedW}><bdi>{doc.used}</bdi></Fit></MeterEnd>
              </Meter>
            </div>
            <Folder full={doc.full} />
          </Card>
        ))}
      </Cards>
      <Paragraph $top={23} $lh={15} $color="#f00">
        <Fit w={526}>توجه: کاربر گرامی ارسال اطلاعات مربوط به فهرست بها در محتویات فایل پاکت ج در سامانه اجباری میباشد.</Fit>
      </Paragraph>
      <DashedRule $top={14} />
      <Buttons>
        <Button><Fit w={21}>چاپ</Fit></Button>
        <Button><Fit w={41}>بازگشت</Fit></Button>
      </Buttons>
    </Page>
  </>
);

export default App;
